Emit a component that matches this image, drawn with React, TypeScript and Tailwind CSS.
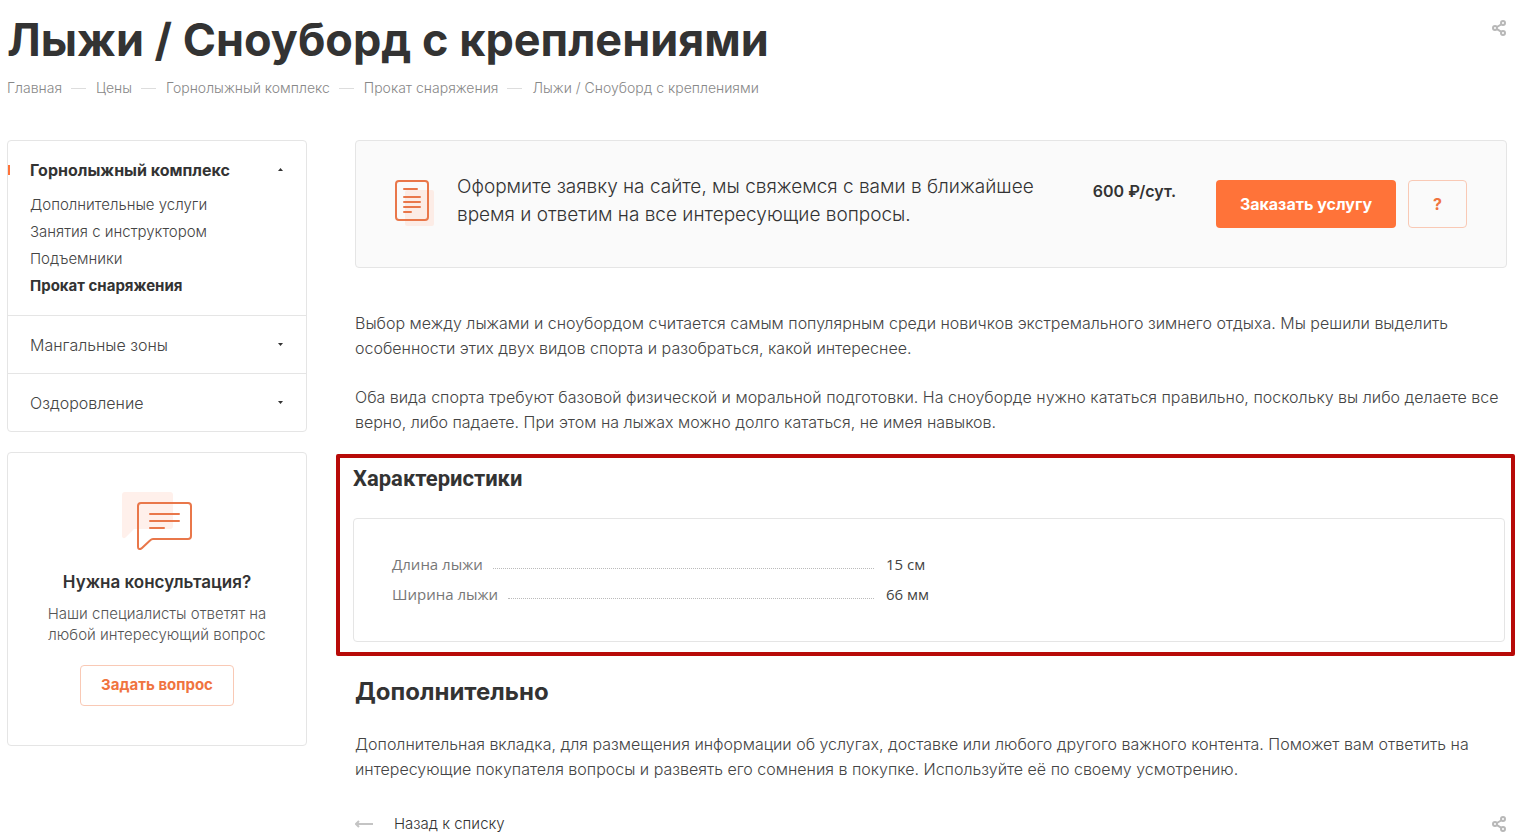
import React from "react";
import clsx from "clsx";

const crumbs = ["Главная", "Цены", "Горнолыжный комплекс", "Прокат снаряжения"];

const services = ["Дополнительные услуги", "Занятия с инструктором", "Подъемники", "Прокат снаряжения"];

const specs = [
    { name: "Длина лыжи", value: "15 см" },
    { name: "Ширина лыжи", value: "66 мм" },
];

const ShareButton: React.FC = () => (
    <button aria-label="Поделиться" className="block shrink-0">
        <svg width="15" height="16" viewBox="0 0 15 16" fill="none" stroke="#b8b8b8" strokeWidth="2">
            <path d="M5 7l4-2.500M5 9.200l4 2.400" />
            <circle cx="3" cy="8" r="2" />
            <circle cx="11" cy="3" r="2" />
            <circle cx="11" cy="13" r="2" />
        </svg>
    </button>
);

const DocumentIcon: React.FC = () => (
    <svg className="shrink-0" width="40" height="46" viewBox="0 0 40 46" fill="none" stroke="#e9774a" strokeWidth="2">
        <rect x="10" y="10" width="29" height="36" rx="2" fill="#fcece6" stroke="none" />
        <rect x="1" y="1" width="32" height="39" rx="3" />
        <path d="M9 9h13M9 17h16M9 22h16M9 27h16M9 32h7" strokeLinecap="round" />
    </svg>
);

const ChatIcon: React.FC = () => (
    <svg width="70" height="58" viewBox="0 0 70 58" fill="none" stroke="#e9774a" strokeWidth="2">
        <path d="M3 0h45a3 3 0 0 1 3 3v31a3 3 0 0 1-3 3H12l-8.500 8.500C2 47 0 46 0 44V3a3 3 0 0 1 3-3z" fill="#fff0eb" stroke="none" />
        <path d="M19 11h47a3 3 0 0 1 3 3v30a3 3 0 0 1-3 3H31c-1.500 0-2 .5-3 1.500l-8 7.500c-2 2-4 1-4-1V14a3 3 0 0 1 3-3z" />
        <path d="M28 22h29M28 29h29M28 36h14" strokeLinecap="round" />
    </svg>
);

interface MenuItemProps {
    title: string;
    open?: boolean;
    children?: React.ReactNode;
}

const MenuItem: React.FC<MenuItemProps> = ({ title, open, children }) => (
    <li className="border-t border-[#e5e5e5] first:border-t-0">
        <button
            aria-expanded={!!open}
            className={clsx(
                "relative flex h-[57px] w-full items-center justify-between pr-[23px] pl-[22px] text-left text-base",
                open ? "font-bold text-[#333]" : "font-light text-[#444]"
            )}
        >
            {open && <span className="absolute left-0 h-[10px] w-[2px] bg-[#ff7339]" />}
            <span className="pt-px">{title}</span>
            <svg width="5" height="3" viewBox="0 0 5 3" fill="#333">
                <path d={open ? "M0 3h5L2.500 0z" : "M0 0h5L2.500 3z"} />
            </svg>
        </button>
        {children}
    </li>
);

const Sidebar: React.FC = () => (
    <aside className="flex w-[300px] shrink-0 flex-col gap-5">
        <ul className="rounded border border-[#e5e5e5]">
            <MenuItem title="Горнолыжный комплекс" open>
                <ul className="-mt-[7px] px-[22px] pb-4 text-[15px] leading-[27px]">
                    {services.map((service, i) => (
                        <li key={service}>
                            <a href="#" className={i === 3 ? "font-bold text-[#333]" : "font-light text-[#444]"}>
                                {service}
                            </a>
                        </li>
                    ))}
                </ul>
            </MenuItem>
            <MenuItem title="Мангальные зоны" />
            <MenuItem title="Оздоровление" />
        </ul>
        <div className="flex flex-col items-center rounded border border-[#e5e5e5] px-6 py-[39px] text-center">
            <ChatIcon />
            <h3 className="mt-5 text-[17px] leading-6 font-semibold text-[#333]">Нужна консультация?</h3>
            <p className="mt-[9px] text-[15px] leading-[21px] font-light text-[#555]">
                Наши специалисты ответят на любой интересующий вопрос
            </p>
            <button className="mt-5 h-[41px] rounded border border-[#f9c9b5] px-5 text-[15px] font-bold text-[#f0743f]">
                Задать вопрос
            </button>
        </div>
    </aside>
);

const OrderBanner: React.FC = () => (
    <section className="flex h-32 items-start rounded border border-[#e5e5e5] bg-[#fafafa] px-[39px] pt-[39px]">
        <DocumentIcon />
        <p className="-mt-[7px] ml-[22px] w-[600px] text-[19px] leading-7 font-light text-[#333]">
            Оформите заявку на сайте, мы свяжемся с вами в ближайшее время и ответим на все интересующие вопросы.
        </p>
        <div className="ml-auto flex shrink-0">
            <p className="mr-10 text-base leading-[22px] font-semibold text-[#333]">600 ₽/сут.</p>
            <button className="mr-3 h-12 w-[180px] rounded bg-[#ff7339] text-base font-bold text-white">Заказать услугу</button>
            <button className="h-12 w-[59px] rounded border border-[#f9c9b5] text-base font-bold text-[#f0743f]">?</button>
        </div>
    </section>
);

const Specs: React.FC = () => (
    <section className="mt-[19px] -mr-2 -ml-[19px] rounded-xs border-4 border-[#b80a08] pt-2 pr-[6px] pb-[10px] pl-[13px]">
        <h2 className="font-['Roboto',sans-serif] text-[22px] leading-[26px] font-bold text-[#333]">Характеристики</h2>
        <div className="mt-[26px] rounded border border-[#e5e5e5] px-[38px] pt-[30px] pb-8">
            <table className="w-full table-fixed font-['Open_Sans',sans-serif] text-[15px] leading-[30px]">
                <tbody>
                    {specs.map((spec) => (
                        <tr key={spec.name}>
                            <th scope="row" className="w-[46%] p-0 text-left font-normal text-[#777]">
                                <div className="flex items-center">
                                    {spec.name}
                                    <span className="mt-2 mr-3 ml-[10px] flex-1 border-b border-dotted border-[#bbb]" />
                                </div>
                            </th>
                            <td className="p-0 text-[#444]">{spec.value}</td>
                        </tr>
                    ))}
                </tbody>
            </table>
        </div>
    </section>
);

export default function App() {
    return (
        <div className="bg-white pt-4 pr-[14px] pl-[7px] font-['Inter',sans-serif] text-[#333]">
            <header className="flex items-start justify-between">
                <div>
                    <h1 className="text-[45px] leading-[48px] font-bold">Лыжи / Сноуборд с креплениями</h1>
                    <nav aria-label="Навигация" className="mt-[14px] flex items-center text-sm leading-5 font-light text-[#888]">
                        {crumbs.map((crumb) => (
                            <React.Fragment key={crumb}>
                                <a href="#">{crumb}</a>
                                <span className="mr-[10px] ml-[9px] h-px w-[15px] bg-[#ddd]" />
                            </React.Fragment>
                        ))}
                        <span>Лыжи / Сноуборд с креплениями</span>
                    </nav>
                </div>
                <div className="pt-1">
                    <ShareButton />
                </div>
            </header>

            <div className="mt-[42px] flex items-start gap-12">
                <Sidebar />
                <main className="min-w-0 flex-1">
                    <OrderBanner />
                    <div className="mt-[43px] space-y-6 text-base leading-[25px] font-light text-[#444]">
                        <p>
                            Выбор между лыжами и сноубордом считается самым популярным среди новичков экстремального зимнего отдыха. Мы
                            решили выделить особенности этих двух видов спорта и разобраться, какой интереснее.
                        </p>
                        <p>
                            Оба вида спорта требуют базовой физической и моральной подготовки. На сноуборде нужно кататься правильно,
                            поскольку вы либо делаете все верно, либо падаете. При этом на лыжах можно долго кататься, не имея навыков.
                        </p>
                    </div>
                    <Specs />
                    <h2 className="mt-[23px] text-2xl leading-[26px] font-bold">Дополнительно</h2>
                    <p className="mt-[27px] text-base leading-[25px] font-light text-[#444]">
                        Дополнительная вкладка, для размещения информации об услугах, доставке или любого другого важного контента.
                        Поможет вам ответить на интересующие покупателя вопросы и развеять его сомнения в покупке. Используйте её по
                        своему усмотрению.
                    </p>
                    <footer className="mt-[34px] flex items-center justify-between">
                        <a href="#" className="flex items-center gap-5 text-[15px] leading-4 font-light">
                            <svg width="19" height="8" viewBox="0 0 19 8" fill="none" stroke="#c4c4c4" strokeWidth="2">
                                <path d="M1 4h17M4 1L1 4l3 3" />
                            </svg>
                            Назад к списку
                        </a>
                        <ShareButton />
                    </footer>
                </main>
            </div>
        </div>
    );
}
